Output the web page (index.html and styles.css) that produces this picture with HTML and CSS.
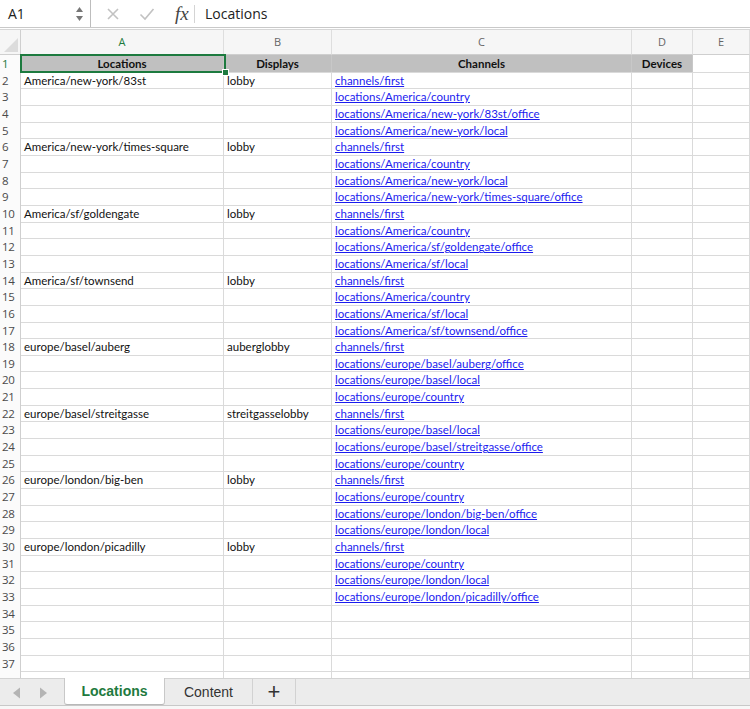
FILE: index.html
```html
<!DOCTYPE html>
<html>
<head>
<meta charset="utf-8">
<link rel="stylesheet" href="styles.css">
</head>
<body>
<div class="app">
  <div class="formula-bar">
    <div class="name-box">
      <span class="cell-ref">A1</span>
      <svg class="stepper" width="9" height="16" viewBox="0 0 9 16"><path d="M4.5 1 L8 6 L1 6 Z" fill="#777"/><path d="M4.5 15 L8 10 L1 10 Z" fill="#777"/></svg>
    </div>
    <div class="fx-tools">
      <svg width="14" height="14" viewBox="0 0 14 14"><path d="M2 2 L12 12 M12 2 L2 12" stroke="#c2c2c2" stroke-width="1.6" fill="none"/></svg>
      <svg width="16" height="14" viewBox="0 0 16 14"><path d="M1.5 7.5 L6 12 L14.5 2" stroke="#c2c2c2" stroke-width="1.6" fill="none"/></svg>
      <span class="fx">fx</span>
    </div>
    <div class="formula">Locations</div>
  </div>

  <div class="sheet">
    <div class="row head">
      <div class="corner"><span class="tri"></span></div>
      <div class="ch sel">A</div><div class="ch">B</div><div class="ch">C</div><div class="ch">D</div><div class="ch">E</div>
    </div>
    <div class="row title">
      <div class="rh sel">1</div>
      <div class="c t">Locations</div><div class="c t">Displays</div><div class="c t">Channels</div><div class="c t">Devices</div><div class="c"></div>
    </div>
    <div class="row"><div class="rh">2</div><div class="c">America/new-york/83st</div><div class="c">lobby</div><div class="c"><a>channels/first</a></div><div class="c"></div><div class="c"></div></div>
    <div class="row"><div class="rh">3</div><div class="c"></div><div class="c"></div><div class="c"><a>locations/America/country</a></div><div class="c"></div><div class="c"></div></div>
    <div class="row"><div class="rh">4</div><div class="c"></div><div class="c"></div><div class="c"><a>locations/America/new-york/83st/office</a></div><div class="c"></div><div class="c"></div></div>
    <div class="row"><div class="rh">5</div><div class="c"></div><div class="c"></div><div class="c"><a>locations/America/new-york/local</a></div><div class="c"></div><div class="c"></div></div>
    <div class="row"><div class="rh">6</div><div class="c">America/new-york/times-square</div><div class="c">lobby</div><div class="c"><a>channels/first</a></div><div class="c"></div><div class="c"></div></div>
    <div class="row"><div class="rh">7</div><div class="c"></div><div class="c"></div><div class="c"><a>locations/America/country</a></div><div class="c"></div><div class="c"></div></div>
    <div class="row"><div class="rh">8</div><div class="c"></div><div class="c"></div><div class="c"><a>locations/America/new-york/local</a></div><div class="c"></div><div class="c"></div></div>
    <div class="row"><div class="rh">9</div><div class="c"></div><div class="c"></div><div class="c"><a>locations/America/new-york/times-square/office</a></div><div class="c"></div><div class="c"></div></div>
    <div class="row"><div class="rh">10</div><div class="c">America/sf/goldengate</div><div class="c">lobby</div><div class="c"><a>channels/first</a></div><div class="c"></div><div class="c"></div></div>
    <div class="row"><div class="rh">11</div><div class="c"></div><div class="c"></div><div class="c"><a>locations/America/country</a></div><div class="c"></div><div class="c"></div></div>
    <div class="row"><div class="rh">12</div><div class="c"></div><div class="c"></div><div class="c"><a>locations/America/sf/goldengate/office</a></div><div class="c"></div><div class="c"></div></div>
    <div class="row"><div class="rh">13</div><div class="c"></div><div class="c"></div><div class="c"><a>locations/America/sf/local</a></div><div class="c"></div><div class="c"></div></div>
    <div class="row"><div class="rh">14</div><div class="c">America/sf/townsend</div><div class="c">lobby</div><div class="c"><a>channels/first</a></div><div class="c"></div><div class="c"></div></div>
    <div class="row"><div class="rh">15</div><div class="c"></div><div class="c"></div><div class="c"><a>locations/America/country</a></div><div class="c"></div><div class="c"></div></div>
    <div class="row"><div class="rh">16</div><div class="c"></div><div class="c"></div><div class="c"><a>locations/America/sf/local</a></div><div class="c"></div><div class="c"></div></div>
    <div class="row"><div class="rh">17</div><div class="c"></div><div class="c"></div><div class="c"><a>locations/America/sf/townsend/office</a></div><div class="c"></div><div class="c"></div></div>
    <div class="row"><div class="rh">18</div><div class="c">europe/basel/auberg</div><div class="c">auberglobby</div><div class="c"><a>channels/first</a></div><div class="c"></div><div class="c"></div></div>
    <div class="row"><div class="rh">19</div><div class="c"></div><div class="c"></div><div class="c"><a>locations/europe/basel/auberg/office</a></div><div class="c"></div><div class="c"></div></div>
    <div class="row"><div class="rh">20</div><div class="c"></div><div class="c"></div><div class="c"><a>locations/europe/basel/local</a></div><div class="c"></div><div class="c"></div></div>
    <div class="row"><div class="rh">21</div><div class="c"></div><div class="c"></div><div class="c"><a>locations/europe/country</a></div><div class="c"></div><div class="c"></div></div>
    <div class="row"><div class="rh">22</div><div class="c">europe/basel/streitgasse</div><div class="c">streitgasselobby</div><div class="c"><a>channels/first</a></div><div class="c"></div><div class="c"></div></div>
    <div class="row"><div class="rh">23</div><div class="c"></div><div class="c"></div><div class="c"><a>locations/europe/basel/local</a></div><div class="c"></div><div class="c"></div></div>
    <div class="row"><div class="rh">24</div><div class="c"></div><div class="c"></div><div class="c"><a>locations/europe/basel/streitgasse/office</a></div><div class="c"></div><div class="c"></div></div>
    <div class="row"><div class="rh">25</div><div class="c"></div><div class="c"></div><div class="c"><a>locations/europe/country</a></div><div class="c"></div><div class="c"></div></div>
    <div class="row"><div class="rh">26</div><div class="c">europe/london/big-ben</div><div class="c">lobby</div><div class="c"><a>channels/first</a></div><div class="c"></div><div class="c"></div></div>
    <div class="row"><div class="rh">27</div><div class="c"></div><div class="c"></div><div class="c"><a>locations/europe/country</a></div><div class="c"></div><div class="c"></div></div>
    <div class="row"><div class="rh">28</div><div class="c"></div><div class="c"></div><div class="c"><a>locations/europe/london/big-ben/office</a></div><div class="c"></div><div class="c"></div></div>
    <div class="row"><div class="rh">29</div><div class="c"></div><div class="c"></div><div class="c"><a>locations/europe/london/local</a></div><div class="c"></div><div class="c"></div></div>
    <div class="row"><div class="rh">30</div><div class="c">europe/london/picadilly</div><div class="c">lobby</div><div class="c"><a>channels/first</a></div><div class="c"></div><div class="c"></div></div>
    <div class="row"><div class="rh">31</div><div class="c"></div><div class="c"></div><div class="c"><a>locations/europe/country</a></div><div class="c"></div><div class="c"></div></div>
    <div class="row"><div class="rh">32</div><div class="c"></div><div class="c"></div><div class="c"><a>locations/europe/london/local</a></div><div class="c"></div><div class="c"></div></div>
    <div class="row"><div class="rh">33</div><div class="c"></div><div class="c"></div><div class="c"><a>locations/europe/london/picadilly/office</a></div><div class="c"></div><div class="c"></div></div>
    <div class="row"><div class="rh">34</div><div class="c"></div><div class="c"></div><div class="c"></div><div class="c"></div><div class="c"></div></div>
    <div class="row"><div class="rh">35</div><div class="c"></div><div class="c"></div><div class="c"></div><div class="c"></div><div class="c"></div></div>
    <div class="row"><div class="rh">36</div><div class="c"></div><div class="c"></div><div class="c"></div><div class="c"></div><div class="c"></div></div>
    <div class="row"><div class="rh">37</div><div class="c"></div><div class="c"></div><div class="c"></div><div class="c"></div><div class="c"></div></div>
    <div class="row"><div class="rh"></div><div class="c"></div><div class="c"></div><div class="c"></div><div class="c"></div><div class="c"></div></div>
    <div class="selection"><span class="handle"></span></div>
  </div>

  <div class="tabbar">
    <div class="nav">
      <svg width="9" height="12" viewBox="0 0 9 12"><path d="M8 0.5 L8 11.5 L1 6 Z" fill="#b4b4b4"/></svg>
      <svg width="9" height="12" viewBox="0 0 9 12"><path d="M1 0.5 L1 11.5 L8 6 Z" fill="#b4b4b4"/></svg>
    </div>
    <div class="tab active">Locations</div>
    <div class="tab">Content</div>
    <div class="tab add">+</div>
  </div>
</div>
</body>
</html>
```

FILE: styles.css
```css
* { box-sizing: border-box; }
html, body { margin: 0; padding: 0; background: #fff; }
body { font-family: Lato, "Open Sans", sans-serif; }

.app {
  width: 750px;
  height: 709px;
  display: flex;
  flex-direction: column;
  overflow: hidden;
}

/* formula bar */
.formula-bar {
  height: 28px;
  flex: 0 0 28px;
  display: flex;
  align-items: center;
  border-bottom: 1px solid #c9c9c9;
  background: #fff;
}
.name-box {
  width: 91px;
  height: 100%;
  display: flex;
  align-items: center;
  justify-content: space-between;
  padding: 0 6px 0 8px;
  border-right: 1px solid #bdbdbd;
}
.cell-ref { font-size: 14px; color: #222; font-family: "Open Sans", sans-serif; }
.stepper { margin-top: 1px; }
.fx-tools {
  width: 104px;
  height: 18px;
  display: flex;
  align-items: center;
  gap: 19px;
  padding-left: 15px;
  border-right: 1px solid #d4d4d4;
}
.fx {
  font-family: "Liberation Serif", serif;
  font-style: italic;
  font-size: 19px;
  color: #444;
  line-height: 1;
  margin-left: 1px;
}
.formula {
  padding-left: 10px;
  font-size: 14px;
  color: #222;
  font-family: "Open Sans", sans-serif;
}

/* sheet */
.sheet {
  flex: 1 1 auto;
  margin-top: 1px;
  border-top: 1px solid #d6d6d6;
  overflow: hidden;
  position: relative;
}
.row {
  display: grid;
  grid-template-columns: 21px 203px 108px 300px 61px 57px;
  height: 16.67px;
}
.row.head { height: 25px; }

.corner {
  background: #f6f6f6;
  border-right: 1px solid #cfcfcf;
  border-bottom: 1px solid #cfcfcf;
  position: relative;
}
.tri {
  position: absolute;
  right: 2px;
  bottom: 2px;
  width: 0;
  height: 0;
  border-left: 14px solid transparent;
  border-bottom: 14px solid #dcdcdc;
}
.ch {
  background: #f6f6f6;
  border-right: 1px solid #dedede;
  border-bottom: 1px solid #cfcfcf;
  font-size: 11px;
  color: #666;
  text-align: center;
  line-height: 24px;
  font-family: "Open Sans", sans-serif;
}
.ch.sel { color: #1e7a3e; }

.rh {
  background: #fbfbfb;
  border-right: 1px solid #cfcfcf;
  border-bottom: 1px solid #dcdcdc;
  font-size: 11.5px;
  color: #4a4a4a;
  padding-left: 2px;
  padding-top: 1px;
  line-height: 15.67px;
  font-family: "Open Sans", sans-serif;
  letter-spacing: -0.3px;
}
.rh.sel { color: #1e7a3e; }

.c {
  border-right: 1px solid #dadada;
  border-bottom: 1px solid #dadada;
  font-size: 11.5px;
  color: #111;
  padding-left: 3px;
  padding-top: 1px;
  line-height: 15.67px;
  white-space: nowrap;
  overflow: visible;
}
.c a {
  color: #1b1bef;
  text-decoration: underline;
  text-underline-offset: 1px;
}
.c.t {
  background: #c0c0c0;
  font-weight: 700;
  text-align: center;
  padding-left: 0;
  border-right-color: #c8c8c8;
}

.selection {
  position: absolute;
  left: 20px;
  top: 24px;
  width: 206px;
  height: 19px;
  border: 2px solid #1d7a3f;
  pointer-events: none;
}
.handle {
  position: absolute;
  right: -5px;
  bottom: -5px;
  width: 7px;
  height: 7px;
  background: #1d7a3f;
  border: 1px solid #fff;
}

/* tab bar */
.tabbar {
  flex: 0 0 31px;
  height: 31px;
  background: #ececec;
  border-top: 1px solid #d3d3d3;
  border-bottom: 3px solid #f7f7f7;
  box-shadow: inset 0 -1px 0 #c8c8c8;
  display: flex;
  align-items: stretch;
  font-family: "Liberation Sans", Arial, sans-serif;
}
.nav {
  width: 64px;
  display: flex;
  align-items: center;
  gap: 18px;
  padding-left: 12px;
}
.tab {
  display: flex;
  align-items: center;
  justify-content: center;
  font-size: 14px;
  color: #333;
  border-right: 1px solid #d2d2d2;
  margin-bottom: 2px;
}
.tab.active {
  width: 101px;
  background: #fff;
  color: #1e7a3e;
  font-weight: 700;
  margin-top: -1px;
  border-left: 1px solid #c8c8c8;
  border-right: 1px solid #c8c8c8;
  border-bottom: 1px solid #b8b8b8;
  border-radius: 0 0 3px 3px;
  margin-bottom: 1px;
}
.tab:nth-child(3) { width: 88px; }
.tab.add {
  width: 43px;
  font-size: 22px;
  font-weight: 400;
  color: #333;
}
```
